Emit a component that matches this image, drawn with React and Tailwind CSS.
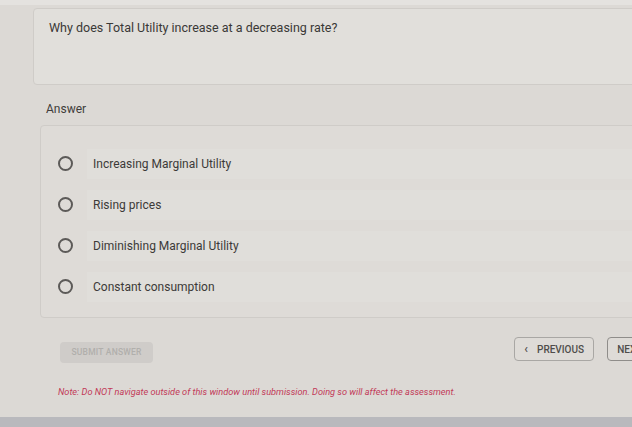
import React, { useState } from 'react';

const OPTIONS = [
  'Increasing Marginal Utility',
  'Rising prices',
  'Diminishing Marginal Utility',
  'Constant consumption',
];

const Radio = ({ checked }) => (
  <span className="flex h-[15px] w-[15px] shrink-0 items-center justify-center rounded-full border-2 border-[#5c5a58]">
    {checked && <span className="h-[7px] w-[7px] rounded-full bg-[#5c5a58]" />}
  </span>
);

export default function App() {
  const [picked, setPicked] = useState(null);

  return (
    <div
      className="relative h-[427px] w-[632px] overflow-hidden bg-[#dcd9d5] text-[#3a3937]"
      style={{ fontFamily: 'Roboto, "Liberation Sans", sans-serif' }}
    >
      <div className="h-[5px] bg-[#e4e2df]" />

      <div className="w-[700px] pl-[33px]">
        {/* question */}
        <div className="mt-[3px] h-[77px] rounded-sm border border-[#cfccc8] bg-[#e1dfdb] px-[15px] pt-[10px] text-[12.5px]">
          Why does Total Utility increase at a decreasing rate?
        </div>

        <div className="mt-[15px] pl-[13px] text-[12px] text-[#3f3d3b]">Answer</div>

        {/* answers */}
        <div className="ml-[7px] mt-[7px] h-[193px] rounded-sm border border-[#cfccc8] bg-[#dedbd7] pt-[17px]">
          {OPTIONS.map((opt, i) => (
            <button
              key={opt}
              onClick={() => setPicked(i)}
              className="flex h-[41px] w-full items-center text-left"
            >
              <span className="pl-[17px] pr-[14px]">
                <Radio checked={picked === i} />
              </span>
              <span className="flex h-[30px] flex-1 items-center bg-[#e0deda] pl-[6px] text-[12px] text-[#3c3a38]">
                {opt}
              </span>
            </button>
          ))}
        </div>

        {/* actions */}
        <div className="mt-[19px] flex items-start pl-[27px] pr-[35px]">
          <button
            disabled
            className="mt-[5px] h-[21px] w-[93px] rounded-sm bg-[#cfccc9] text-[8.5px] font-medium uppercase tracking-wide text-[#b1afac]"
          >
            Submit Answer
          </button>
          <div className="flex-1" />
          <button className="flex h-[24px] w-[80px] items-center justify-center gap-[9px] rounded-sm border border-[#a9a7a4] bg-[#dedbd7] text-[10px] font-medium uppercase text-[#4f4d4b]">
            <span className="text-[12px] leading-none">‹</span>
            Previous
          </button>
          <button className="ml-[13px] flex h-[24px] items-center gap-[9px] rounded-sm border border-[#8f8d8a] bg-[#dedbd7] px-[9px] text-[10px] font-medium uppercase text-[#4f4d4b]">
            Next
            <span className="text-[12px] leading-none">›</span>
          </button>
        </div>

        <p className="mt-[22px] pl-[25px] text-[9.2px] italic text-[#c23a58]">
          Note: Do NOT navigate outside of this window until submission. Doing so will affect the assessment.
        </p>
      </div>

      <div className="absolute bottom-0 left-0 h-[10px] w-full bg-[#b9b9bd]" />
    </div>
  );
}
